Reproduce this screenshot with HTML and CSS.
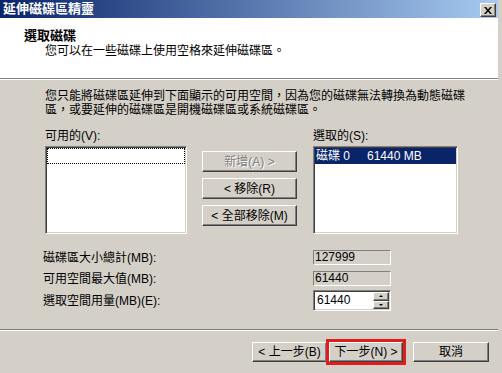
FILE: index.html
```html
<!DOCTYPE html>
<html lang="zh-Hant">
<head>
    <meta charset="UTF-8">
    <title>延伸磁碟區精靈</title>
    <link rel="stylesheet" href="styles.css">
</head>
<body>
    <div class="window">
        <!-- 標題列 -->
        <div class="titlebar">
            <span class="title">延伸磁碟區精靈</span>
            <span class="close">
                <svg width="8" height="7" viewBox="0 0 8 7">
                    <path d="M0 0h2l2 2.5L6 0h2L5 3.5 8 7H6L4 4.5 2 7H0l3-3.5z" fill="#000"/>
                </svg>
            </span>
        </div>

        <!-- 白色標頭 -->
        <div class="header">
            <div class="header-title">選取磁碟</div>
            <div class="header-sub">您可以在一些磁碟上使用空格來延伸磁碟區。</div>
        </div>

        <div class="content">
            <p class="intro">您只能將磁碟區延伸到下面顯示的可用空間，因為您的磁碟無法轉換為動態磁碟<br>區，或要延伸的磁碟區是開機磁碟區或系統磁碟區。</p>

            <div class="pickers">
                <div class="picker picker-left">
                    <div class="label">可用的(V):</div>
                    <div class="listbox">
                        <div class="focus-row"></div>
                    </div>
                </div>
                <div class="move-buttons">
                    <button class="btn" disabled>新增(A) &gt;</button>
                    <button class="btn">&lt; 移除(R)</button>
                    <button class="btn">&lt; 全部移除(M)</button>
                </div>
                <div class="picker picker-right">
                    <div class="label">選取的(S):</div>
                    <div class="listbox">
                        <div class="row selected"><span class="disk">磁碟 0</span><span>61440 MB</span></div>
                    </div>
                </div>
            </div>

            <div class="sizes">
                <div class="size-row row-1">
                    <span class="size-label">磁碟區大小總計(MB):</span>
                    <span class="field">127999</span>
                </div>
                <div class="size-row row-2">
                    <span class="size-label">可用空間最大值(MB):</span>
                    <span class="field">61440</span>
                </div>
                <div class="size-row row-3">
                    <span class="size-label">選取空間用量(MB)(E):</span>
                    <span class="spinner">
                        <span class="spinner-value">61440</span>
                        <span class="spin-buttons">
                            <span class="spin up"></span>
                            <span class="spin down"></span>
                        </span>
                    </span>
                </div>
            </div>
        </div>

        <!-- 精靈按鈕 -->
        <div class="footer">
            <button class="btn btn-back">&lt; 上一步(B)</button>
            <button class="btn btn-next">下一步(N) &gt;</button>
            <button class="btn btn-cancel">取消</button>
        </div>
    </div>
</body>
</html>
```

FILE: styles.css
```css
* {
    box-sizing: border-box;
}
body {
    margin: 0;
    font-family: "Liberation Sans", "Noto Sans CJK TC", sans-serif;
    font-size: 12px;
    color: #000;
    background: #d4d0c8;
}
.window {
    width: 502px;
    height: 373px;
    background: #d4d0c8;
    border-right: 4px solid #d4d0c8;
    display: flex;
    flex-direction: column;
    overflow: hidden;
}

/* 標題列 */
.titlebar {
    height: 18px;
    flex: none;
    background: linear-gradient(to right, #0a246a, #a6caf0);
    display: flex;
    justify-content: space-between;
    align-items: flex-start;
    padding: 0 2px 0 3px;
}
.title {
    color: #fff;
    font-weight: bold;
    font-size: 13px;
    line-height: 17px;
}
.close {
    width: 16px;
    height: 14px;
    margin-top: 3px;
    background: #d4d0c8;
    border: 1px solid;
    border-color: #fff #404040 #404040 #fff;
    box-shadow: inset -1px -1px #808080;
    display: flex;
    justify-content: center;
    align-items: center;
}

/* 白色標頭 */
.header {
    height: 61px;
    flex: none;
    background: #fff;
    border-bottom: 1px solid #808080;
    box-shadow: 0 1px 0 #fff;
    padding: 11px 0 0 24px;
}
.header-title {
    font-weight: bold;
    font-size: 13px;
    line-height: 14px;
}
.header-sub {
    line-height: 14px;
    margin-top: 1px;
    padding-left: 21px;
}

.content {
    flex: 1;
    padding: 10px 0 0 45px;
}
.intro {
    margin: 0;
    line-height: 14px;
    white-space: nowrap;
}

.pickers {
    display: flex;
    margin-top: 12px;
}
.label {
    line-height: 14px;
    margin-bottom: 3px;
}
.picker-left {
    width: 142px;
}
.picker-right {
    width: 145px;
}
.listbox {
    height: 88px;
    background: #fff;
    border: 1px solid;
    border-color: #808080 #fff #fff #808080;
    box-shadow: inset 1px 1px #404040, inset -1px -1px #d4d0c8;
    padding: 1px;
}
.focus-row {
    height: 16px;
    border: 1px dotted #000;
}
.row {
    height: 16px;
    line-height: 16px;
    display: flex;
    padding-left: 1px;
}
.row.selected {
    background: #0a246a;
    color: #fff;
}
.disk {
    width: 51px;
}

.move-buttons {
    width: 95px;
    margin: 0 16px 0 15px;
    padding-top: 22px;
    display: flex;
    flex-direction: column;
    gap: 6px;
}

/* 按鈕 */
.btn {
    font: inherit;
    font-size: 12px;
    line-height: 14px;
    height: 21px;
    padding: 0;
    color: #000;
    background: #d4d0c8;
    border: 1px solid;
    border-color: #fff #404040 #404040 #fff;
    box-shadow: inset -1px -1px #808080;
}
.btn:disabled {
    color: #808080;
    text-shadow: 1px 1px #fff;
}

.sizes {
    margin: 16px 0 0 -2px;
}
.size-row {
    display: flex;
    align-items: center;
}
.size-label {
    width: 270px;
    line-height: 14px;
}
.row-1 {
    height: 15px;
    margin-bottom: 6px;
}
.row-2 {
    height: 15px;
    margin-bottom: 4px;
}
.row-3 {
    height: 21px;
}
.field {
    width: 78px;
    height: 15px;
    line-height: 13px;
    padding-left: 1px;
    border: 1px solid;
    border-color: #808080 #fff #fff #808080;
}
.spinner {
    width: 78px;
    height: 21px;
    display: flex;
    background: #fff;
    border: 1px solid;
    border-color: #808080 #fff #fff #808080;
    box-shadow: inset 1px 1px #404040, inset -1px -1px #d4d0c8;
    padding: 1px 1px 1px 3px;
}
.spinner-value {
    flex: 1;
    line-height: 17px;
}
.spin-buttons {
    width: 16px;
    display: flex;
    flex-direction: column;
}
.spin {
    flex: 1;
    background: #d4d0c8;
    border: 1px solid;
    border-color: #fff #404040 #404040 #fff;
    box-shadow: inset -1px -1px #808080;
    display: flex;
    justify-content: center;
    align-items: center;
}
.spin::after {
    content: '';
    border-left: 2px solid transparent;
    border-right: 2px solid transparent;
}
.spin.up::after {
    border-bottom: 2px solid #000;
}
.spin.down::after {
    border-top: 2px solid #000;
}

/* 精靈按鈕 */
.footer {
    height: 44px;
    flex: none;
    border-top: 1px solid #808080;
    box-shadow: inset 0 1px #fff;
    padding: 12px 9px 0 0;
    display: flex;
    justify-content: flex-end;
    align-items: flex-start;
}
.footer .btn {
    height: 20px;
}
.btn-back {
    width: 75px;
}
.btn-next {
    width: 74px;
    margin-left: 2px;
    outline: 3px solid #e01c1c;
}
.btn-cancel {
    width: 76px;
    margin-left: 10px;
}
```
